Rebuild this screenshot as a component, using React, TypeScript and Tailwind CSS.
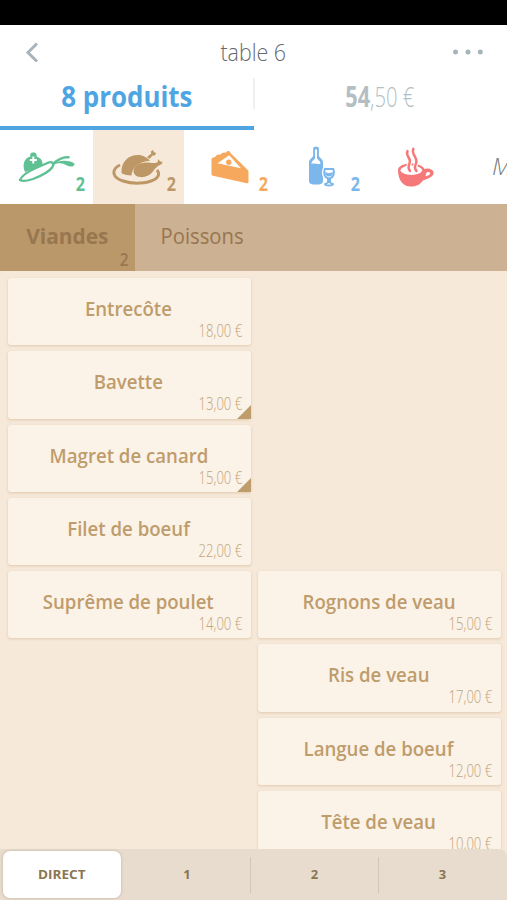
import React from "react";

type Product = { name: string; price: string; options?: boolean };

const left: Product[] = [
  { name: "Entrecôte", price: "18,00 €" },
  { name: "Bavette", price: "13,00 €", options: true },
  { name: "Magret de canard", price: "15,00 €", options: true },
  { name: "Filet de boeuf", price: "22,00 €" },
  { name: "Suprême de poulet", price: "14,00 €" },
];

const right: Product[] = [
  { name: "Rognons de veau", price: "15,00 €" },
  { name: "Ris de veau", price: "17,00 €" },
  { name: "Langue de boeuf", price: "12,00 €" },
  { name: "Tête de veau", price: "10,00 €" },
];

function Card({ name, price, options }: Product) {
  return (
    <div className="relative h-[67.3px] shrink-0 rounded-[3px] bg-[#fbf2e8] shadow-[0_1px_3px_rgba(190,145,95,0.38)]">
      <div className="pt-[17px] pr-[1px] text-center text-[19px] leading-[28px] font-semibold text-[#bf9c6b]">
        <span className="inline-block origin-center scale-x-[0.98] whitespace-nowrap">{name}</span>
      </div>
      <div className="-mt-[5px] pr-[9px] text-right text-[19px] leading-[24px] font-light text-[#c0a57b]">
        <span className="inline-block origin-right scale-x-[0.69] whitespace-nowrap">{price}</span>
      </div>
      {options && (
        <svg className="absolute right-0 bottom-0 h-[14px] w-[14px]" viewBox="0 0 14 14">
          <path d="M14 0V14H0Z" fill="#bf9c6b" />
        </svg>
      )}
    </div>
  );
}

function Salad() {
  return (
    <svg className="h-[74px] w-[93px]" viewBox="0 130 93 74" fill="none">
      <path d="M25 172C22 165 24 158 30.500 156.500C29.500 154 31 152.300 33.300 152.500C35.500 152.300 37.300 154 36.500 156.500C41 158 43.500 161 42 166Z" fill="#5fc193" />
      <path d="M33.300 156.500V163.500M29.800 160H36.800" stroke="#fff" strokeWidth="2" />
      <path d="M20 180C22 175 28 171.500 36 168L48 162.700C52 161 54.500 163.500 52.500 167C49 172 41 176 33 179C27 181 22 181.500 20 180Z" fill="#fff" stroke="#5fc193" strokeWidth="2.300" />
      <path d="M53.500 163.500C58 159.500 63 156.500 68.500 157.300" stroke="#5fc193" strokeWidth="2.600" strokeLinecap="round" />
      <path d="M54 164C58 160.800 62 160.200 67 161C72 161.500 75 163 74.500 164.800C73.500 167.200 69.500 167 66.500 165.300C63 163 59 162.500 54 164.600Z" fill="#5fc193" />
    </svg>
  );
}

function Turkey() {
  return (
    <svg className="h-[74px] w-[91px]" viewBox="93 130 91 74" fill="none">
      <path d="M120 165C110 170 113 178 123 181C133 184.300 147 183.800 154.500 179.500C159.500 176.500 159.500 173 157 170" stroke="#bd9765" strokeWidth="3" />
      <path d="M121.500 173C121 162 128 155 138 155C143 155 147 157.500 150 160.800C140 161.300 132 167 131.500 175.500C127 175.500 123.500 174.500 121.500 173Z" fill="#bd9765" />
      <path d="M133.500 171C134 166 139 162.500 146 162.500C151 162.500 154 164 157.500 162.200L158.300 159.300L160.300 161.500L162.500 161.700L161.800 164L159.300 165.300C156.500 166.800 155 169 152.500 172C149 177 141 178.500 136.500 176C134.500 174.800 133.400 173 133.500 171Z" fill="#bd9765" />
      <path d="M147 157L151.300 153.600L150.700 151.500L153 150L154 152.300L156.300 153L154.700 155.400L152.600 155.400L149.500 159Z" fill="#bd9765" />
    </svg>
  );
}

function Pie() {
  return (
    <svg className="h-[74px] w-[92px]" viewBox="184 130 92 74" fill="none">
      <path d="M211.500 161C211 158 213 157 215 157.300C216 154.500 219 154 220.500 154.800C221.500 152.500 224.500 152 226 152.700C227 150.500 230 150.300 230.500 153L247.500 169.700C248.300 170.500 248.500 171 248.500 172V182C248.500 183 247.800 183.500 246.800 183.300L213 175.700C212 175.500 211.500 175 211.500 174Z" fill="#f6a95c" />
      <path d="M217.500 163.200L229.200 155.300L241 168.200Z" fill="#fff" />
      <circle cx="228.800" cy="162.200" r="2.700" fill="#f6a95c" />
    </svg>
  );
}

function Bottle() {
  return (
    <svg className="h-[74px] w-[92px]" viewBox="276 130 92 74" fill="none">
      <path d="M313.200 148.300C313.200 147.200 314 146.700 316 146.700C318 146.700 318.900 147.200 318.900 148.300V155.500C319 158 323 158.500 323 162.500V181C323 183.500 321 184.600 316 184.600C311 184.600 309 183.500 309 181V162.500C309 158.500 313.200 158 313.200 155.500Z" fill="#7bb7ea" />
      <path d="M315 149.500H317V158C317.300 160 320.500 160.500 320.500 163.500C318 165 314.500 162.500 311.500 164C311.500 160.500 314.700 160 315 158Z" fill="#fff" />
      <path d="M324.800 169H333.300C334.800 173 333.500 177.500 330.300 178.500V182L333 185H325L327.700 182V178.500C324.500 177.500 323.300 173 324.800 169Z" fill="#fff" stroke="#fff" strokeWidth="4.500" />
      <path d="M324.800 169H333.300C334.800 173 333.500 177.500 330 178.300V182.500L333 184.200C332.500 185.800 325.500 185.800 325 184.200L328 182.500V178.300C324.500 177.500 323.300 173 324.800 169Z" fill="#fff" stroke="#7bb7ea" strokeWidth="2" />
      <path d="M325 172C328 173.500 330 173.500 333 172L332.500 174.500C331 177 327 177 325.500 174.500Z" fill="#7bb7ea" />
    </svg>
  );
}

function Cup() {
  return (
    <svg className="h-[74px] w-[92px]" viewBox="368 130 92 74" fill="none">
      <path d="M398 170C398 166 404 163.500 411 163.500C418 163.500 423.500 166 424.500 169C428 167.500 433.500 169 433.600 173C433.600 176.500 428.500 178.500 423 180.500C420 185 415.500 186.600 411 186.600C403 186.600 398 180 398 170Z" fill="#f77878" />
      <ellipse cx="411.300" cy="170.300" rx="10.800" ry="4.700" fill="#fff" />
      <path d="M426.500 172.500C429 171.500 430.500 172.500 430 174C429 175.500 427 176 425.500 176.300Z" fill="#fff" />
      <path d="M407.500 151C405 156 412 158.500 409.500 163.500C408.500 166 407.500 168 410 171M413.300 148.800C411 155 418.500 158 416 163.500C414.500 166.500 414 168.500 416.500 171" stroke="#fff" strokeWidth="4.500" />
      <path d="M407.500 151C405 156 412 158.500 409.500 163.500C408.500 166 407.500 168 410 171M413.300 148.800C411 155 418.500 158 416 163.500C414.500 166.500 414 168.500 416.500 171" stroke="#f77878" strokeWidth="2.500" strokeLinecap="round" />
    </svg>
  );
}

function Count({ className }: { className: string }) {
  return <span className={"absolute right-[8px] bottom-[8px] origin-right scale-x-[0.85] text-[19px] leading-[24px] font-bold " + className}>2</span>;
}

export default function App() {
  return (
    <div className="flex h-[900px] w-[507px] flex-col overflow-hidden bg-[#f6e9da] font-['Open_Sans','Noto_Sans',sans-serif]">
      <div className="h-[25px] shrink-0 bg-black" />
      <header className="flex h-[53px] shrink-0 items-center justify-between bg-white pr-[24px] pl-[25px]">
        <svg className="h-[20px] w-[30px]" viewBox="0 0 30 20" fill="none">
          <path d="M12 1.500L3 10.500L12 19.500" stroke="#a9b4bc" strokeWidth="3" />
        </svg>
        <h1 className="text-[23px] leading-[30px] font-light text-[#63696e]">
          <span className="inline-block -translate-x-[1px] scale-x-[0.93]">table 6</span>
        </h1>
        <svg className="h-[6px] w-[30px]" viewBox="0 0 30 6" fill="#a4b6b9">
          <circle cx="2.500" cy="3" r="2.500" />
          <circle cx="15" cy="3" r="2.500" />
          <circle cx="27.300" cy="3" r="2.500" />
        </svg>
      </header>
      <div className="flex h-[52px] shrink-0 bg-white">
        <div className="w-[253px] text-center text-[28px] leading-[36px] font-bold text-[#4fa5e2]">
          <div className="h-[52px] w-[254px] border-b-[4px] border-[#4fa5e2]">
            <span className="inline-block scale-x-[0.925]">8 produits</span>
          </div>
        </div>
        <div className="h-[31px] w-[2px] bg-[#eff0f1]" />
        <div className="flex-1 text-center text-[28px] leading-[36px] font-light text-[#b3bfc5]">
          <span className="inline-block scale-x-[0.72]">
            <b className="inline-block origin-right scale-x-[1.08] font-bold">54</b>,50 €
          </span>
        </div>
      </div>
      <nav className="flex h-[74px] shrink-0 overflow-hidden bg-white">
        <div className="relative w-[93px] shrink-0">
          <Salad />
          <Count className="text-[#5fc193]" />
        </div>
        <div className="relative w-[91px] shrink-0 bg-[#f6e9da]">
          <Turkey />
          <Count className="text-[#bd9765]" />
        </div>
        <div className="relative w-[92px] shrink-0">
          <Pie />
          <Count className="text-[#f6a95c]" />
        </div>
        <div className="relative w-[92px] shrink-0">
          <Bottle />
          <Count className="text-[#7bb7ea]" />
        </div>
        <div className="w-[92px] shrink-0">
          <Cup />
        </div>
        <div className="shrink-0 pt-[19px] pl-[32px] text-[24px] leading-[34px] font-light text-[#777b7e] italic">M</div>
      </nav>
      <div className="flex h-[67px] shrink-0 bg-[#ccb193] text-[22px] leading-[30px] text-[#977650]">
        <div className="relative w-[135px] bg-[#bb986a] pt-[16px] text-center font-bold">
          <span className="inline-block scale-x-[0.95]">Viandes</span>
          <span className="absolute right-[6px] bottom-0 scale-x-[0.85] text-[18px] leading-[24px] font-semibold">2</span>
        </div>
        <div className="w-[134px] pt-[16px] text-center">
          <span className="inline-block scale-x-[0.92]">Poissons</span>
        </div>
      </div>
      <main className="grid h-[578px] shrink-0 grid-cols-2 gap-x-[7px] overflow-hidden pt-[7px] pr-[6px] pl-[7.500px]">
        <div className="flex flex-col gap-[6px]">
          {left.map((p) => (
            <Card key={p.name} {...p} />
          ))}
        </div>
        <div className="flex flex-col gap-[6px] pt-[293.200px]">
          {right.map((p) => (
            <Card key={p.name} {...p} />
          ))}
        </div>
      </main>
      <footer className="flex h-[51px] shrink-0 items-center rounded-tr-[8px] bg-[#e8dccf] text-[13px] font-bold text-[#8c7551]">
        <div className="ml-[3px] flex h-[47px] w-[118px] items-center justify-center rounded-[7px] bg-white shadow-[0_0_3px_rgba(120,90,50,0.35)]">
          <span className="inline-block scale-x-[1.04]">DIRECT</span>
        </div>
        <div className="w-[129px] pl-[3px] text-center">1</div>
        <div className="h-[36px] w-px bg-[#d3c6b8]" />
        <div className="w-[127px] text-center">2</div>
        <div className="h-[36px] w-px bg-[#d3c6b8]" />
        <div className="w-[127px] text-center">3</div>
      </footer>
    </div>
  );
}
